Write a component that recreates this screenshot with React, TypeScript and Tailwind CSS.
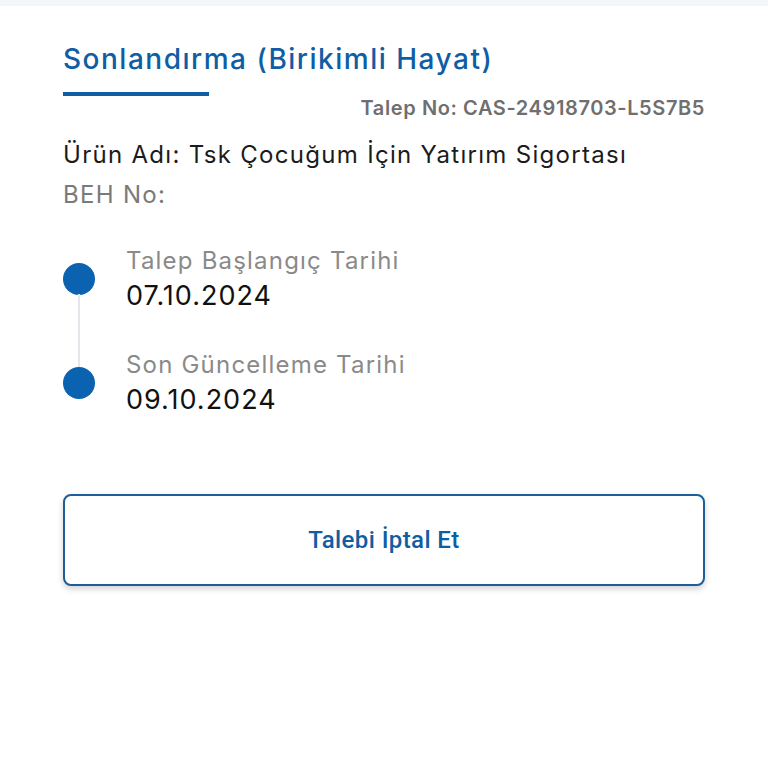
import React from "react";

type Step = {
  label: string;
  date: string;
};

const steps: Step[] = [
  { label: "Talep Başlangıç Tarihi", date: "07.10.2024" },
  { label: "Son Güncelleme Tarihi", date: "09.10.2024" },
];

const App: React.FC = () => {
  return (
    <div className="min-h-screen bg-white font-['Inter',sans-serif]">
      <div className="h-[6px] bg-[#f2f5f9]" />

      <div className="px-[63px] pt-[36px]">
        <h1 className="text-[28px] leading-[34px] font-medium text-[#0f5ea4] tracking-[1.5px]">
          Sonlandırma (Birikimli Hayat)
        </h1>
        <div className="mt-[16px] h-[4px] w-[146px] bg-[#0f5ea4]" />

        <div className="flex justify-end">
          <span className="text-[20px] leading-[24px] font-semibold text-[#6f6f6f] tracking-[0.6px]">
            Talep No: CAS-24918703-L5S7B5
          </span>
        </div>

        <p className="mt-[21px] text-[24px] leading-[28px] text-[#1b1b1b] tracking-[1.3px]">
          Ürün Adı: Tsk Çocuğum İçin Yatırım Sigortası
        </p>
        <p className="mt-[12px] text-[24px] leading-[28px] text-[#7a7a7a] tracking-[1.3px]">
          BEH No:
        </p>

        <div className="mt-[35px] flex flex-col gap-[34px]">
          {steps.map((step, i) => (
            <div key={step.label} className="relative flex items-start">
              <div className="relative w-[63px] shrink-0 self-stretch">
                <div className="absolute left-0 top-[19px] h-[32px] w-[32px] rounded-full bg-[#0b62b0]" />
                {i < steps.length - 1 && (
                  <div className="absolute left-[15px] top-[50px] h-[73px] w-[2px] bg-[#e3e6ea]" />
                )}
              </div>
              <div className="flex flex-col">
                <span className="text-[24px] leading-[34px] text-[#8a8a8a] tracking-[1.2px]">
                  {step.label}
                </span>
                <span className="text-[27px] leading-[36px] text-[#111111] tracking-[1px]">
                  {step.date}
                </span>
              </div>
            </div>
          ))}
        </div>

        <button className="mt-[76px] flex h-[92px] w-full items-center justify-center rounded-[8px] border-2 border-[#1d5d98] bg-white shadow-[0_3px_6px_rgba(0,0,0,0.18)]">
          <span className="font-['Roboto',sans-serif] text-[24px] font-medium text-[#0f5ea4] tracking-[0.4px]">
            Talebi İptal Et
          </span>
        </button>
      </div>
    </div>
  );
};

export default App;
